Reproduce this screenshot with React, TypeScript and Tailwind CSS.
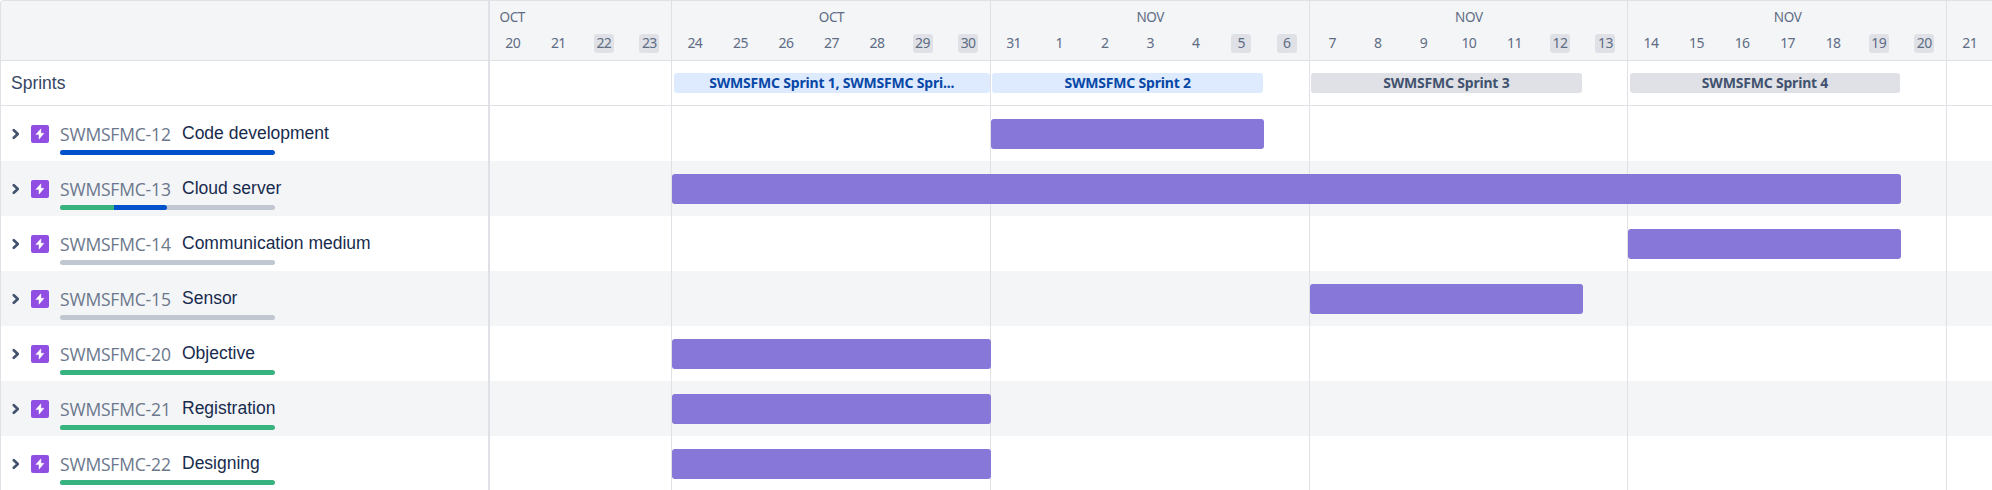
import React from "react";

const DAY = 45.53;

type Segment = { color: string; width: number };
type Epic = { key: string; name: string; progress: Segment[]; start: number; days: number };

const BLUE = "#0052cc";
const GREEN = "#36b37e";

const epics: Epic[] = [
  { key: "SWMSFMC-12", name: "Code development", progress: [{ color: BLUE, width: 100 }], start: 11, days: 6 },
  {
    key: "SWMSFMC-13",
    name: "Cloud server",
    progress: [
      { color: GREEN, width: 25 },
      { color: BLUE, width: 24.8 },
    ],
    start: 4,
    days: 27,
  },
  { key: "SWMSFMC-14", name: "Communication medium", progress: [], start: 25, days: 6 },
  { key: "SWMSFMC-15", name: "Sensor", progress: [], start: 18, days: 6 },
  { key: "SWMSFMC-20", name: "Objective", progress: [{ color: GREEN, width: 100 }], start: 4, days: 7 },
  { key: "SWMSFMC-21", name: "Registration", progress: [{ color: GREEN, width: 100 }], start: 4, days: 7 },
  { key: "SWMSFMC-22", name: "Designing", progress: [{ color: GREEN, width: 100 }], start: 4, days: 7 },
];

const weeks = [
  { month: "OCT", days: [20, 21, 22, 23] },
  { month: "OCT", days: [24, 25, 26, 27, 28, 29, 30] },
  { month: "NOV", days: [31, 1, 2, 3, 4, 5, 6] },
  { month: "NOV", days: [7, 8, 9, 10, 11, 12, 13] },
  { month: "NOV", days: [14, 15, 16, 17, 18, 19, 20] },
  { month: "", days: [21] },
];

const sprints = [
  { name: "SWMSFMC Sprint 1, SWMSFMC Spri...", days: 7, gap: 0, active: true },
  { name: "SWMSFMC Sprint 2", days: 6, gap: 1, active: true },
  { name: "SWMSFMC Sprint 3", days: 6, gap: 1, active: false },
  { name: "SWMSFMC Sprint 4", days: 6, gap: 1, active: false },
];

function Chevron() {
  return (
    <svg width="8" height="12" viewBox="0 0 8 12" fill="none" className="shrink-0">
      <path d="M2.8 2.2 L6.8 6 L2.8 9.8" stroke="#42526e" strokeWidth="2.6" strokeLinecap="round" strokeLinejoin="round" />
    </svg>
  );
}

function EpicIcon() {
  return (
    <svg width="18" height="18" viewBox="0 0 18 18" className="shrink-0">
      <rect width="18" height="18" rx="2" fill="#904ee2" />
      <path d="M9.9 3.8 L4.8 9.6 H8 V14.2 L13 8.3 H9.9 Z" fill="#fff" stroke="#fff" strokeWidth="0.4" strokeLinejoin="round" />
    </svg>
  );
}

function EpicRow({ epic, shaded }: { epic: Epic; shaded: boolean }) {
  return (
    <div className={`flex h-[55px] pl-[10px] ${shaded ? "bg-[#f4f5f7]" : "bg-white"}`}>
      <div className="flex h-[55px] w-[49px] items-center gap-[12px]">
        <Chevron />
        <EpicIcon />
      </div>
      <div className="flex flex-col">
        <div className="flex h-[44px] whitespace-nowrap">
          <span className="w-[122px] pt-[16px] font-['Open_Sans','Noto_Sans',sans-serif] text-[17.5px] leading-[24px] font-normal tracking-[-0.18px] text-[#6b778c]">
            {epic.key}
          </span>
          <span className="pt-[15px] font-['Liberation_Sans',Arial,sans-serif] text-[17.5px] leading-[24px] text-[#172b4d]">
            {epic.name}
          </span>
        </div>
        <div className="flex h-[5px] w-[215px] overflow-hidden rounded-[3px] bg-[#c1c7d0]">
          {epic.progress.map((s, i) => (
            <div
              key={i}
              className={i === epic.progress.length - 1 ? "rounded-r-[3px]" : ""}
              style={{ width: `${s.width}%`, background: s.color }}
            />
          ))}
        </div>
      </div>
    </div>
  );
}

function DateHeader() {
  return (
    <div className="flex h-[60px] bg-[#f4f5f7]">
      {weeks.map((week, w) => (
        <div key={w} className="shrink-0" style={{ width: week.days.length * DAY }}>
          <div className={`h-[33px] pt-[6px] text-[13.5px] leading-[20px] tracking-[-0.4px] ${w === 0 ? "pl-[9.5px]" : "text-center"}`}>
            {week.month}
          </div>
          <div className="flex">
            {week.days.map((d, i) => {
              const weekend = i >= week.days.length - 2 && week.days.length > 1;
              return (
                <div key={d} className="flex flex-1 justify-center">
                  <span className={`flex h-[19px] w-[20px] items-center justify-center rounded-[3px] text-[14px] leading-[18px] tracking-[-0.6px] ${weekend ? "bg-[#dfe1e6]" : ""}`}>
                    <span className="pb-[1px]">{d}</span>
                  </span>
                </div>
              );
            })}
          </div>
        </div>
      ))}
    </div>
  );
}

function SprintRow() {
  return (
    <div className="flex h-[44px] items-center" style={{ paddingLeft: 4 * DAY }}>
      {sprints.map((s) => (
        <div key={s.name} className="shrink-0 pr-[1px] pl-[1.5px]" style={{ width: s.days * DAY, marginRight: s.gap * DAY }}>
          <div
            className={`h-[19.5px] rounded-[3px] text-center text-[14px] leading-[19px] font-bold tracking-[-0.2px] whitespace-nowrap ${
              s.active ? "bg-[#deebff] text-[#0747a6]" : "bg-[#dfe1e6] text-[#42526e]"
            }`}
          >
            {s.name}
          </div>
        </div>
      ))}
    </div>
  );
}

export default function App() {
  return (
    <div className="flex h-[490px] w-[1992px] overflow-hidden rounded-tl-[4px] border-t border-l border-[#dfe1e6] bg-white">
      <aside className="w-[487px] shrink-0">
        <div className="h-[60px] border-b border-[#dfe1e6] bg-[#f4f5f7]" />
        <div className="flex h-[45px] items-center border-b border-[#dfe1e6] pl-[10px] font-['Liberation_Sans',Arial,sans-serif] text-[17.5px] text-[#344563]">
          Sprints
        </div>
        {epics.map((e, i) => (
          <EpicRow key={e.key} epic={e} shaded={i % 2 === 1} />
        ))}
      </aside>
      <div className="w-[2px] shrink-0 bg-[#dfe1e6]" />
      <main className="relative w-[1502px] overflow-hidden font-['Noto_Sans',sans-serif] text-[#5e6c84]">
        <div className="border-b border-[#dfe1e6]">
          <div className="h-[59px] overflow-hidden">
            <DateHeader />
          </div>
        </div>
        <div className="relative z-20 h-[45px] border-b border-[#dfe1e6]">
          <SprintRow />
        </div>
        {epics.map((e, i) => (
          <div key={e.key} className={`h-[55px] pt-[13px] ${i % 2 === 1 ? "bg-[#f4f5f7]" : ""}`}>
            <div
              className="relative z-20 h-[29.5px] rounded-[3px] bg-[#8777d9]"
              style={{ marginLeft: e.start * DAY, width: e.days * DAY }}
            />
          </div>
        ))}
        <div className="pointer-events-none absolute inset-0 z-10 flex">
          {weeks.slice(0, 5).map((w, i) => (
            <div key={i} className="shrink-0 border-r border-[#dfe1e6]" style={{ width: w.days.length * DAY }} />
          ))}
        </div>
      </main>
    </div>
  );
}
